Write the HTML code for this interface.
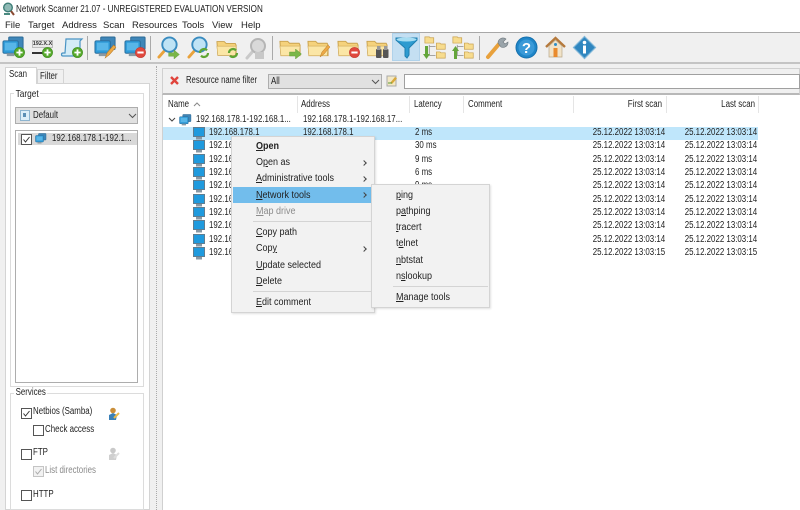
<!DOCTYPE html>
<html><head><meta charset="utf-8">
<style>
html,body{margin:0;padding:0;width:800px;height:510px;overflow:hidden;background:#fff}
body{position:relative;font-family:"Liberation Sans",sans-serif;font-size:10px;color:#222;filter:blur(.3px)}
.a{position:absolute}
.t{position:absolute;white-space:nowrap;line-height:12px;height:12px;transform:scaleX(.79);transform-origin:0 50%}
.r{text-align:right;transform-origin:100% 50%}
.mb{font-size:9.5px;top:20px;transform:none}
u{text-decoration:underline}
svg{position:absolute;overflow:visible}
.cb{position:absolute;width:9px;height:9px;border:1px solid #555;background:#fff}
.m{font-size:10px;color:#222;transform:scaleX(.9)}
.arrow{position:absolute;width:3px;height:3px;border-top:1px solid #444;border-right:1px solid #444;transform:rotate(45deg)}
</style></head>
<body>
<svg width="0" height="0" style="position:absolute">
<defs>
<symbol id="pc" viewBox="0 0 24 24" overflow="visible">
<rect x="7" y="1" width="15" height="13" rx="1" fill="#3f86b8" stroke="#2b6a96"/>
<rect x="1" y="5" width="16" height="13" rx="1.5" fill="#2f9bd8" stroke="#2a6d9c"/>
<rect x="3" y="7" width="12" height="8" fill="#58b6e8"/>
<rect x="5" y="18" width="8" height="3" fill="#8a9aa5"/>
</symbol>
<symbol id="plus" viewBox="0 0 12 12"><circle cx="6" cy="6" r="5.6" fill="#55a82a" stroke="#3b8a1c" stroke-width=".6"/><path d="M6 2.6v6.8M2.6 6h6.8" stroke="#fff" stroke-width="2"/></symbol>
<symbol id="minus" viewBox="0 0 12 12"><circle cx="6" cy="6" r="5.6" fill="#e0483e" stroke="#c23a30" stroke-width=".6"/><path d="M2.6 6h6.8" stroke="#fff" stroke-width="2.2"/></symbol>
<symbol id="folder" viewBox="0 0 24 20"><path d="M1 3h8l2 2h10l1 2v11H2z" fill="#f5d27c" stroke="#c9a24f"/><path d="M1 8h21l-1 10H2z" fill="#fbe6a6" stroke="#d0ab5c" stroke-width=".6"/></symbol>
<symbol id="mag" viewBox="0 0 24 24"><path d="M9 14L2 22" stroke="#e9a23c" stroke-width="3" stroke-linecap="round"/><circle cx="13" cy="9" r="7.5" fill="#bfe3f5" stroke="#3a8cc0" stroke-width="2"/></symbol>
<symbol id="arr" viewBox="0 0 12 10"><path d="M0 3h6V0l6 5-6 5V7H0z" fill="#7ab648" stroke="#5a9430" stroke-width=".4"/></symbol>
<symbol id="ref" viewBox="0 0 12 12"><path d="M2 6a4 4 0 0 1 7-2.6M10 6a4 4 0 0 1-7 2.6" fill="none" stroke="#5fa634" stroke-width="2.2"/></symbol>
<symbol id="pen" viewBox="0 0 12 14"><path d="M1 13l2-5L9 1l2 2-6 7z" fill="#eda946" stroke="#b87a26" stroke-width=".5"/></symbol>
<symbol id="tree" viewBox="0 0 26 26"><path d="M1 1h5l1 1h4v6H1z" fill="#f7dc8e" stroke="#c9a24f" stroke-width=".8"/><path d="M14 8h4l1 1h5v6H14z" fill="#f7dc8e" stroke="#c9a24f" stroke-width=".8"/><path d="M14 18h4l1 1h5v6H14z" fill="#f7dc8e" stroke="#c9a24f" stroke-width=".8"/><path d="M6 10v12h7M6 12h7" stroke="#999" fill="none"/></symbol>
</defs>
</svg>

<!-- title -->
<svg style="left:2px;top:2px" width="13" height="14" viewBox="0 0 13 14"><circle cx="6" cy="5.5" r="4.3" fill="#8fb9b5" stroke="#3f7f78" stroke-width="1.4"/><path d="M9 9l3 4" stroke="#8a4a33" stroke-width="2"/><path d="M2 12h6" stroke="#4a8a80" stroke-width="2"/></svg>
<div class="t" style="left:16px;top:3px;font-size:10.5px;transform:scaleX(.77)">Network Scanner 21.07 - UNREGISTERED EVALUATION VERSION</div>
<!-- menu -->
<div class="t mb" style="left:5px">File</div>
<div class="t mb" style="left:28px">Target</div>
<div class="t mb" style="left:62px">Address</div>
<div class="t mb" style="left:103px">Scan</div>
<div class="t mb" style="left:132px">Resources</div>
<div class="t mb" style="left:182px">Tools</div>
<div class="t mb" style="left:212px">View</div>
<div class="t mb" style="left:241px">Help</div>

<!-- toolbar -->
<div class="a" style="left:0;top:32px;width:800px;height:31px;background:#f0f0f0;border-top:1px solid #a8a8a8;box-sizing:border-box"></div>
<div class="a" style="left:0;top:62px;width:800px;height:2px;background:#c4c4c4"></div>
<div class="a" style="left:0;top:64px;width:800px;height:446px;background:#f0f0f0"></div>
<div class="a" style="left:392px;top:33px;width:28px;height:28px;background:#c4dff2;border:1px solid #b0d2ea;box-sizing:border-box"></div>
<div class="a" style="left:87px;top:36px;width:1px;height:24px;background:#aaa"></div>
<div class="a" style="left:150px;top:36px;width:1px;height:24px;background:#aaa"></div>
<div class="a" style="left:272px;top:36px;width:1px;height:24px;background:#aaa"></div>
<div class="a" style="left:479px;top:36px;width:1px;height:24px;background:#aaa"></div>

<svg style="left:2px;top:36px" width="23" height="23"><use href="#pc" width="23" height="23"/></svg>
<svg style="left:14px;top:47px" width="11" height="11"><use href="#plus" width="11" height="11"/></svg>

<div class="a" style="left:32px;top:40px;width:21px;height:8px;background:#e8e8e8;border:1px solid #bbb;box-sizing:border-box"></div>
<div class="t" style="left:32px;top:38px;font-size:5.5px;font-weight:bold;width:21px;text-align:center;color:#333;transform:none">192.X.X</div>
<div class="a" style="left:32px;top:52px;width:12px;height:2px;background:#333"></div>
<svg style="left:42px;top:47px" width="11" height="11"><use href="#plus" width="11" height="11"/></svg>

<svg style="left:60px;top:37px" width="24" height="22" viewBox="0 0 24 22"><path d="M6 2h16l-2 2v11c0 2-1 4-3 4H3c-2 0-2-3 0-3h2z" fill="#d4ecf7" stroke="#4a94c4" stroke-width="1.2"/></svg>
<svg style="left:72px;top:47px" width="11" height="11"><use href="#plus" width="11" height="11"/></svg>

<svg style="left:94px;top:36px" width="23" height="23"><use href="#pc" width="23" height="23"/></svg>
<svg style="left:104px;top:44px" width="13" height="15"><use href="#pen" width="13" height="15"/></svg>
<svg style="left:124px;top:36px" width="23" height="23"><use href="#pc" width="23" height="23"/></svg>
<svg style="left:135px;top:47px" width="11" height="11"><use href="#minus" width="11" height="11"/></svg>

<svg style="left:157px;top:36px" width="23" height="23"><use href="#mag" width="23" height="23"/></svg>
<svg style="left:168px;top:50px" width="12" height="9"><use href="#arr" width="12" height="9"/></svg>
<svg style="left:187px;top:36px" width="23" height="23"><use href="#mag" width="23" height="23"/></svg>
<svg style="left:198px;top:47px" width="12" height="12"><use href="#ref" width="12" height="12"/></svg>
<svg style="left:216px;top:38px" width="22" height="20"><use href="#folder" width="22" height="20"/></svg>
<svg style="left:227px;top:47px" width="12" height="12"><use href="#ref" width="12" height="12"/></svg>
<svg style="left:245px;top:37px" width="23" height="23" viewBox="0 0 23 23"><path d="M8 14L2 21" stroke="#c9c9c9" stroke-width="3" stroke-linecap="round"/><circle cx="13" cy="9" r="7" fill="#d9d9d9" stroke="#b5b5b5" stroke-width="2"/><rect x="10" y="15" width="9" height="7" fill="#c8c8c8"/></svg>

<svg style="left:279px;top:38px" width="23" height="20"><use href="#folder" width="23" height="20"/></svg>
<svg style="left:289px;top:49px" width="13" height="10"><use href="#arr" width="13" height="10"/></svg>
<svg style="left:307px;top:38px" width="23" height="20"><use href="#folder" width="23" height="20"/></svg>
<svg style="left:319px;top:44px" width="12" height="14"><use href="#pen" width="12" height="14"/></svg>
<svg style="left:337px;top:38px" width="23" height="20"><use href="#folder" width="23" height="20"/></svg>
<svg style="left:349px;top:47px" width="11" height="11"><use href="#minus" width="11" height="11"/></svg>
<svg style="left:366px;top:38px" width="23" height="20"><use href="#folder" width="23" height="20"/></svg>
<svg style="left:376px;top:46px" width="13" height="12" viewBox="0 0 13 12"><rect x="0" y="3" width="5.5" height="9" rx="1" fill="#555"/><rect x="7" y="3" width="5.5" height="9" rx="1" fill="#555"/><rect x="1" y="0" width="3.5" height="4" fill="#999"/><rect x="8" y="0" width="3.5" height="4" fill="#999"/></svg>

<svg style="left:395px;top:36px" width="23" height="23" viewBox="0 0 23 23"><path d="M1 2h21v2l-8 8v7l-2 3-2-2v-8L1 4z" fill="#2e9bd0" stroke="#1e7fb0"/><ellipse cx="11.5" cy="3.5" rx="10" ry="2" fill="#a7ddf2"/></svg>
<svg style="left:424px;top:36px" width="23" height="23"><use href="#tree" width="23" height="23"/></svg>
<svg style="left:423px;top:46px" width="7" height="13" viewBox="0 0 7 13"><path d="M2 0h3v8h2l-3.500 5L0 8h2z" fill="#64a53a"/></svg>
<svg style="left:452px;top:36px" width="23" height="23"><use href="#tree" width="23" height="23"/></svg>
<svg style="left:452px;top:46px" width="7" height="13" viewBox="0 0 7 13"><path d="M2 13h3V5h2L3.500 0 0 5h2z" fill="#64a53a"/></svg>

<svg style="left:486px;top:36px" width="23" height="23" viewBox="0 0 23 23"><path d="M2 21L13 8" stroke="#e8a13c" stroke-width="4" stroke-linecap="round"/><path d="M12 7a5 5 0 0 1 8-4l-3 3 2 2 3-2a5 5 0 0 1-7 5z" fill="#9aa4aa" stroke="#6d777d" stroke-width=".6"/></svg>
<svg style="left:515px;top:36px" width="23" height="23" viewBox="0 0 23 23"><circle cx="11.500" cy="11.500" r="10.500" fill="#1f86c8" stroke="#1670ad" stroke-width="1"/><circle cx="11.500" cy="11.500" r="8" fill="#3a9ad8"/><text x="11.500" y="17" text-anchor="middle" font-family="Liberation Sans" font-size="15" font-weight="bold" fill="#fff">?</text></svg>
<svg style="left:545px;top:36px" width="21" height="22" viewBox="0 0 21 22"><path d="M1 11L10.500 2 20 11" fill="none" stroke="#b5793c" stroke-width="2.400"/><path d="M4 10l6.500-6 6.500 6v11H4z" fill="#f1e3c8" stroke="#b9a888" stroke-width=".7"/><rect x="8.500" y="12" width="4" height="9" fill="#e98a2c"/><circle cx="10.500" cy="8.500" r="1.500" fill="#2f8fc8"/></svg>
<svg style="left:573px;top:36px" width="23" height="23" viewBox="0 0 23 23"><path d="M11.500 0.500L22.500 11.500 11.500 22.500 0.500 11.500z" fill="#2f86bf" stroke="#7fb6d8" stroke-width="1.200"/><circle cx="11.500" cy="6.500" r="1.800" fill="#fff"/><rect x="10" y="9.500" width="3" height="8" fill="#fff"/></svg>

<!-- splitter dots -->
<div class="a" style="left:156px;top:66px;width:0;height:444px;border-left:1px dotted #aaa"></div>

<!-- Left panel -->
<div class="a" style="left:5px;top:83px;width:145px;height:427px;background:#fff;border:1px solid #d4d4d4;box-sizing:border-box"></div>
<div class="a" style="left:5px;top:67px;width:32px;height:17px;background:#fff;border:1px solid #d4d4d4;border-bottom:none;box-sizing:border-box"></div>
<div class="a" style="left:37px;top:69px;width:27px;height:14px;background:#f0f0f0;border:1px solid #d4d4d4;border-bottom:none;box-sizing:border-box"></div>
<div class="t" style="left:9px;top:69px">Scan</div>
<div class="t" style="left:40px;top:71px">Filter</div>

<div class="a" style="left:10px;top:93px;width:134px;height:294px;border:1px solid #dcdcdc;box-sizing:border-box"></div>
<div class="t" style="left:14px;top:88px;background:#fff;padding:0 2px;font-size:10.5px">Target</div>
<div class="a" style="left:15px;top:107px;width:123px;height:17px;background:#e1e1e1;border:1px solid #adadad;box-sizing:border-box"></div>
<svg style="left:20px;top:110px" width="10" height="11"><rect x=".5" y=".5" width="9" height="10" fill="#dceef8" stroke="#8db4cf"/><rect x="3" y="3" width="3" height="4" fill="#5b8fb5"/></svg>
<div class="t" style="left:33px;top:110px">Default</div>
<svg style="left:128px;top:113px" width="9" height="6"><path d="M1 1l3.500 3.500L8 1" fill="none" stroke="#555" stroke-width="1"/></svg>

<div class="a" style="left:15px;top:130px;width:123px;height:253px;background:#fff;border:1px solid #adadad;box-sizing:border-box"></div>
<div class="a" style="left:18px;top:133px;width:119px;height:12px;background:#d9d9d9"></div>
<div class="cb" style="left:21px;top:134px"></div>
<svg style="left:21px;top:134px" width="11" height="11"><path d="M2.500 5.500l2 2.500 4-5" fill="none" stroke="#333" stroke-width="1"/></svg>
<svg style="left:35px;top:133px" width="12" height="12"><use href="#pc" width="12" height="12"/></svg>
<div class="t" style="left:52px;top:133px">192.168.178.1-192.1...</div>

<!-- Services -->
<div class="a" style="left:10px;top:393px;width:134px;height:117px;border:1px solid #dcdcdc;box-sizing:border-box"></div>
<div class="t" style="left:14px;top:387px;background:#fff;padding:0 2px">Services</div>
<div class="cb" style="left:21px;top:408px"></div>
<svg style="left:21px;top:408px" width="11" height="11"><path d="M2.500 5.500l2 2.500 4-5" fill="none" stroke="#333" stroke-width="1"/></svg>
<div class="t" style="left:33px;top:406px">Netbios (Samba)</div>
<svg style="left:107px;top:407px" width="13" height="14" viewBox="0 0 13 14"><circle cx="6" cy="3.500" r="2.800" fill="#c98e3a"/><path d="M2 13V8l4-2 4 2-1 5z" fill="#3a80b8"/><path d="M7 11l5-5" stroke="#e8b84a" stroke-width="2"/></svg>
<div class="cb" style="left:33px;top:425px"></div>
<div class="t" style="left:45px;top:424px">Check access</div>
<div class="cb" style="left:21px;top:449px"></div>
<div class="t" style="left:33px;top:447px">FTP</div>
<svg style="left:107px;top:447px" width="13" height="14" viewBox="0 0 13 14"><circle cx="6" cy="3.500" r="2.800" fill="#c9c9c9"/><path d="M2 13V8l4-2 4 2-1 5z" fill="#cfcfcf"/><path d="M7 11l5-5" stroke="#ddd" stroke-width="2"/></svg>
<div class="cb" style="left:33px;top:466px;border-color:#c4c4c4;background:#f2f2f2"></div>
<svg style="left:33px;top:466px" width="11" height="11"><path d="M2.500 5.500l2 2.500 4-5" fill="none" stroke="#aaa" stroke-width="1"/></svg>
<div class="t" style="left:45px;top:465px;color:#8a8a8a">List directories</div>
<div class="cb" style="left:21px;top:490px"></div>
<div class="t" style="left:33px;top:489px">HTTP</div>

<!-- Filter bar -->
<div class="a" style="left:162px;top:68px;width:638px;height:27px;background:#f0f0f0;border:1px solid #d0d0d0;border-bottom:2px solid #b8b8b8;box-sizing:border-box"></div>
<svg style="left:170px;top:76px" width="9" height="9"><path d="M1 1l7 7M8 1L1 8" stroke="#e0443c" stroke-width="2.400"/></svg>
<div class="t" style="left:186px;top:75px;transform:scaleX(.77)">Resource name filter</div>
<div class="a" style="left:268px;top:74px;width:114px;height:15px;background:#e1e1e1;border:1px solid #adadad;box-sizing:border-box"></div>
<div class="t" style="left:271px;top:76px">All</div>
<svg style="left:371px;top:79px" width="9" height="6"><path d="M1 1l3.500 3.500L8 1" fill="none" stroke="#555"/></svg>
<svg style="left:386px;top:75px" width="12" height="12" viewBox="0 0 12 12"><rect x="1" y="1" width="9" height="10" fill="#f3e8c4" stroke="#aaa"/><path d="M4 8l5-6 2 1.500-5 5.500z" fill="#d9a93a"/><path d="M2 8h4" stroke="#5a9a3a"/></svg>
<div class="a" style="left:404px;top:74px;width:396px;height:15px;background:#fff;border:1px solid #a0a0a0;box-sizing:border-box"></div>

<!-- List -->
<div class="a" style="left:162px;top:95px;width:638px;height:415px;background:#fff"></div>
<div class="a" style="left:162px;top:95px;width:1px;height:415px;background:#d0d0d0"></div>
<div class="t" style="left:168px;top:99px">Name</div>
<svg style="left:193px;top:102px" width="8" height="5"><path d="M1 4l3-3 3 3" fill="none" stroke="#888"/></svg>
<div class="t" style="left:301px;top:99px">Address</div>
<div class="t" style="left:414px;top:99px">Latency</div>
<div class="t" style="left:468px;top:99px">Comment</div>
<div class="t r" style="left:574px;top:99px;width:88px">First scan</div>
<div class="t r" style="left:666px;top:99px;width:89px">Last scan</div>
<div class="a" style="left:297px;top:96px;width:1px;height:17px;background:#e5e5e5"></div>
<div class="a" style="left:409px;top:96px;width:1px;height:17px;background:#e5e5e5"></div>
<div class="a" style="left:463px;top:96px;width:1px;height:17px;background:#e5e5e5"></div>
<div class="a" style="left:573px;top:96px;width:1px;height:17px;background:#e5e5e5"></div>
<div class="a" style="left:666px;top:96px;width:1px;height:17px;background:#e5e5e5"></div>
<div class="a" style="left:758px;top:96px;width:1px;height:17px;background:#e5e5e5"></div>

<svg style="left:168px;top:117px" width="8" height="6"><path d="M1 1l3 3 3-3" fill="none" stroke="#444"/></svg>
<svg style="left:179px;top:114px" width="13" height="13"><use href="#pc" width="13" height="13"/></svg>
<div class="t" style="left:196px;top:114px">192.168.178.1-192.168.1...</div>
<div class="t" style="left:303px;top:114px">192.168.178.1-192.168.17...</div>

<div class="a" style="left:163px;top:127px;width:595px;height:13px;background:#bfe6fb"></div>

<!-- rows -->
<div class="t" style="left:209px;top:127px">192.168.178.1</div><div class="t" style="left:303px;top:127px">192.168.178.1</div><div class="t" style="left:415px;top:127px">2 ms</div>
<div class="t r" style="left:574px;top:127px;width:89px">25.12.2022 13:03:14</div><div class="t r" style="left:666px;top:127px;width:89px">25.12.2022 13:03:14</div>
<div class="t" style="left:209px;top:140px">192.168.178.2</div><div class="t" style="left:303px;top:140px">192.168.178.2</div><div class="t" style="left:415px;top:140px">30 ms</div>
<div class="t r" style="left:574px;top:140px;width:89px">25.12.2022 13:03:14</div><div class="t r" style="left:666px;top:140px;width:89px">25.12.2022 13:03:14</div>
<div class="t" style="left:209px;top:154px">192.168.178.3</div><div class="t" style="left:415px;top:154px">9 ms</div>
<div class="t r" style="left:574px;top:154px;width:89px">25.12.2022 13:03:14</div><div class="t r" style="left:666px;top:154px;width:89px">25.12.2022 13:03:14</div>
<div class="t" style="left:209px;top:167px">192.168.178.4</div><div class="t" style="left:415px;top:167px">6 ms</div>
<div class="t r" style="left:574px;top:167px;width:89px">25.12.2022 13:03:14</div><div class="t r" style="left:666px;top:167px;width:89px">25.12.2022 13:03:14</div>
<div class="t" style="left:209px;top:180px">192.168.178.5</div><div class="t" style="left:415px;top:180px">9 ms</div>
<div class="t r" style="left:574px;top:180px;width:89px">25.12.2022 13:03:14</div><div class="t r" style="left:666px;top:180px;width:89px">25.12.2022 13:03:14</div>
<div class="t" style="left:209px;top:194px">192.168.178.6</div>
<div class="t r" style="left:574px;top:194px;width:89px">25.12.2022 13:03:14</div><div class="t r" style="left:666px;top:194px;width:89px">25.12.2022 13:03:14</div>
<div class="t" style="left:209px;top:207px">192.168.178.7</div>
<div class="t r" style="left:574px;top:207px;width:89px">25.12.2022 13:03:14</div><div class="t r" style="left:666px;top:207px;width:89px">25.12.2022 13:03:14</div>
<div class="t" style="left:209px;top:220px">192.168.178.8</div>
<div class="t r" style="left:574px;top:220px;width:89px">25.12.2022 13:03:14</div><div class="t r" style="left:666px;top:220px;width:89px">25.12.2022 13:03:14</div>
<div class="t" style="left:209px;top:234px">192.168.178.9</div>
<div class="t r" style="left:574px;top:234px;width:89px">25.12.2022 13:03:14</div><div class="t r" style="left:666px;top:234px;width:89px">25.12.2022 13:03:14</div>
<div class="t" style="left:209px;top:247px">192.168.178.10</div>
<div class="t r" style="left:574px;top:247px;width:89px">25.12.2022 13:03:15</div><div class="t r" style="left:666px;top:247px;width:89px">25.12.2022 13:03:15</div>

<!-- row icons -->
<svg style="left:193px;top:127px" width="12" height="13" viewBox="0 0 12 13"><rect x=".5" y=".5" width="11" height="9" fill="#1f9ade" stroke="#607d90"/><rect x="3" y="10" width="6" height="2.500" fill="#8798a5"/></svg>
<svg style="left:193px;top:140px" width="12" height="13" viewBox="0 0 12 13"><rect x=".5" y=".5" width="11" height="9" fill="#1f9ade" stroke="#607d90"/><rect x="3" y="10" width="6" height="2.500" fill="#8798a5"/></svg>
<svg style="left:193px;top:154px" width="12" height="13" viewBox="0 0 12 13"><rect x=".5" y=".5" width="11" height="9" fill="#1f9ade" stroke="#607d90"/><rect x="3" y="10" width="6" height="2.500" fill="#8798a5"/></svg>
<svg style="left:193px;top:167px" width="12" height="13" viewBox="0 0 12 13"><rect x=".5" y=".5" width="11" height="9" fill="#1f9ade" stroke="#607d90"/><rect x="3" y="10" width="6" height="2.500" fill="#8798a5"/></svg>
<svg style="left:193px;top:180px" width="12" height="13" viewBox="0 0 12 13"><rect x=".5" y=".5" width="11" height="9" fill="#1f9ade" stroke="#607d90"/><rect x="3" y="10" width="6" height="2.500" fill="#8798a5"/></svg>
<svg style="left:193px;top:194px" width="12" height="13" viewBox="0 0 12 13"><rect x=".5" y=".5" width="11" height="9" fill="#1f9ade" stroke="#607d90"/><rect x="3" y="10" width="6" height="2.500" fill="#8798a5"/></svg>
<svg style="left:193px;top:207px" width="12" height="13" viewBox="0 0 12 13"><rect x=".5" y=".5" width="11" height="9" fill="#1f9ade" stroke="#607d90"/><rect x="3" y="10" width="6" height="2.500" fill="#8798a5"/></svg>
<svg style="left:193px;top:220px" width="12" height="13" viewBox="0 0 12 13"><rect x=".5" y=".5" width="11" height="9" fill="#1f9ade" stroke="#607d90"/><rect x="3" y="10" width="6" height="2.500" fill="#8798a5"/></svg>
<svg style="left:193px;top:234px" width="12" height="13" viewBox="0 0 12 13"><rect x=".5" y=".5" width="11" height="9" fill="#1f9ade" stroke="#607d90"/><rect x="3" y="10" width="6" height="2.500" fill="#8798a5"/></svg>
<svg style="left:193px;top:247px" width="12" height="13" viewBox="0 0 12 13"><rect x=".5" y=".5" width="11" height="9" fill="#1f9ade" stroke="#607d90"/><rect x="3" y="10" width="6" height="2.500" fill="#8798a5"/></svg>

<!-- Context menu -->
<div class="a" style="left:231px;top:136px;width:144px;height:177px;background:#f2f2f2;border:1px solid #d4d4d4;box-sizing:border-box;box-shadow:1px 1px 2px rgba(0,0,0,.12)"></div>
<div class="a" style="left:233px;top:187px;width:138px;height:16px;background:#72bdec"></div>
<div class="t m" style="left:256px;top:141px;font-weight:bold"><u>O</u>pen</div>
<div class="t m" style="left:256px;top:157px">O<u>p</u>en as</div>
<div class="t m" style="left:256px;top:173px"><u>A</u>dministrative tools</div>
<div class="t m" style="left:256px;top:190px"><u>N</u>etwork tools</div>
<div class="t m" style="left:256px;top:206px;color:#8c8c8c"><u>M</u>ap drive</div>
<div class="t m" style="left:256px;top:227px"><u>C</u>opy path</div>
<div class="t m" style="left:256px;top:243px">Cop<u>y</u></div>
<div class="t m" style="left:256px;top:260px"><u>U</u>pdate selected</div>
<div class="t m" style="left:256px;top:276px"><u>D</u>elete</div>
<div class="t m" style="left:256px;top:297px"><u>E</u>dit comment</div>
<div class="a" style="left:253px;top:221px;width:119px;height:1px;background:#d4d4d4"></div>
<div class="a" style="left:253px;top:291px;width:119px;height:1px;background:#d4d4d4"></div>
<div class="arrow" style="left:362px;top:161px"></div>
<div class="arrow" style="left:362px;top:177px"></div>
<div class="arrow" style="left:362px;top:193px"></div>
<div class="arrow" style="left:362px;top:247px"></div>

<!-- Submenu -->
<div class="a" style="left:371px;top:184px;width:119px;height:124px;background:#f2f2f2;border:1px solid #d4d4d4;box-sizing:border-box;box-shadow:1px 1px 2px rgba(0,0,0,.12)"></div>
<div class="t m" style="left:396px;top:190px"><u>p</u>ing</div>
<div class="t m" style="left:396px;top:206px">p<u>a</u>thping</div>
<div class="t m" style="left:396px;top:222px"><u>t</u>racert</div>
<div class="t m" style="left:396px;top:238px">t<u>e</u>lnet</div>
<div class="t m" style="left:396px;top:255px"><u>n</u>btstat</div>
<div class="t m" style="left:396px;top:271px">n<u>s</u>lookup</div>
<div class="t m" style="left:396px;top:292px"><u>M</u>anage tools</div>
<div class="a" style="left:393px;top:286px;width:95px;height:1px;background:#d4d4d4"></div>
</body></html>
